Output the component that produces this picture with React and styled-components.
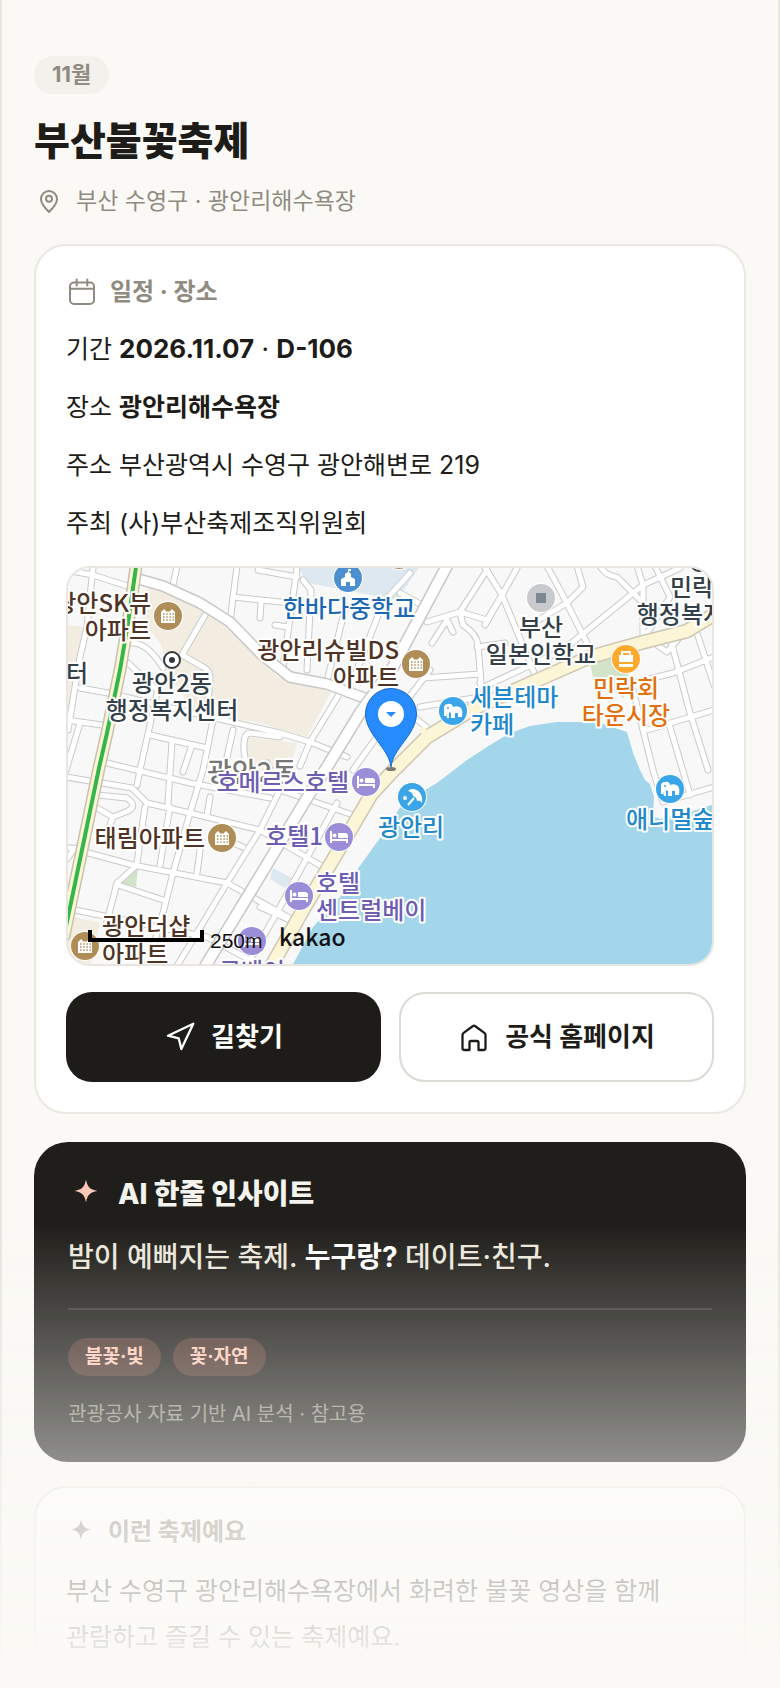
import React from "react";
import styled, { createGlobalStyle, css } from "styled-components";

const Global = createGlobalStyle`
  * { box-sizing: border-box; }
  body {
    margin: 0;
    background: #faf9f5;
    color: #1d1c18;
    font-family: Inter, "Noto Sans CJK KR", sans-serif;
    font-size: 25px;
  }
`;

const Shell = styled.main`
  min-height: 100vh;
  padding: 56px 32px 0;
  border: solid #e8e6df;
  border-width: 0 2px;
`;

const MonthChip = styled.span`
  display: block;
  width: fit-content;
  padding: 0 18px 2px;
  border-radius: 19px;
  background: #f2f1ec;
  color: #8f8b80;
  font-size: 22px;
  font-weight: 700;
  line-height: 36px;
`;

const Title = styled.h1`
  margin: 20px 0 0;
  font-size: 39px;
  font-weight: 800;
  line-height: 54px;
`;

const Location = styled.p`
  display: flex;
  align-items: center;
  gap: 12px;
  margin: 18px 0 0;
  color: #8f8b80;
  font-size: 23px;
  line-height: 30px;
`;

const Card = styled.section`
  margin-top: ${(p) => p.$gap}px;
  padding: ${(p) => p.$padding};
  border: 2px solid #eae8e1;
  border-radius: 32px;
  background: #fff;
`;

const CardTitle = styled.h2`
  display: flex;
  align-items: center;
  gap: 12px;
  height: 32px;
  margin: 0;
  color: #8f8b80;
  font-size: 24px;
  font-weight: 700;
  line-height: 32px;
`;

const InfoList = styled.dl`
  display: flex;
  flex-direction: column;
  gap: 16px;
  margin: 20px 0 0;
`;

const InfoRow = styled.div`
  display: flex;
  gap: 7px;
  line-height: 42px;

  dd {
    margin: 0;
    font-size: ${(p) => (p.$numeric ? 26 : 25)}px;
  }
`;

const MapFrame = styled.div`
  height: 400px;
  margin-top: 22px;
  border: 2px solid #eae6df;
  border-radius: 24px;
  overflow: hidden;
  background: #f8f8f8;

  svg {
    display: block;
    width: 100%;
    height: 100%;
  }
`;

const Actions = styled.div`
  display: grid;
  grid-template-columns: 1fr 1fr;
  gap: 18px;
  margin-top: 26px;
`;

const action = css`
  display: flex;
  align-items: center;
  justify-content: center;
  gap: 15px;
  height: 90px;
  padding: 0;
  border-radius: 26px;
  font-family: inherit;
  font-size: 26px;
  font-weight: 700;
  line-height: 36px;
`;

const PrimaryButton = styled.button`
  ${action}
  border: 0;
  background: #1d1c18;
  color: #fff;
`;

const OutlineLink = styled.a`
  ${action}
  border: 2px solid #dcdad2;
  background: #fff;
  color: #1d1c18;
  text-decoration: none;
`;

const InsightCard = styled.section`
  margin-top: 28px;
  padding: 34px;
  border-radius: 34px;
  background: #1f1e1a;
`;

const InsightTitle = styled.h2`
  display: flex;
  align-items: center;
  gap: 14px;
  margin: 0;
  color: #f5f3ee;
  font-size: 28px;
  font-weight: 800;
  line-height: 36px;
`;

const InsightText = styled.p`
  margin: 22px 0 0;
  color: #ece7dc;
  font-size: 28px;
  font-weight: 500;
  line-height: 46px;

  strong { color: #fff; }
`;

const TagRow = styled.ul`
  display: flex;
  gap: 12px;
  margin: 28px 0 0;
  padding: 28px 0 0;
  border-top: 2px solid #3a3935;
  list-style: none;
`;

const Tag = styled.li`
  padding: 0 17px;
  border-radius: 19px;
  background: #4a332c;
  color: #ffc9b8;
  font-size: 19px;
  font-weight: 700;
  line-height: 38px;
`;

const Note = styled.p`
  margin: 24px 0 0;
  color: #8f8b80;
  font-size: 20px;
  line-height: 28px;
`;

const Description = styled.p`
  margin: 20px 0 0;
  line-height: 46px;
  word-break: keep-all;
`;

const BottomFade = styled.div`
  position: fixed;
  right: 0;
  bottom: 0;
  left: 0;
  height: 466px;
  background: linear-gradient(rgba(250, 249, 245, 0), #faf9f5);
  pointer-events: none;
`;

const MapText = styled.text`
  font-family: "Noto Sans CJK KR", sans-serif;
  font-size: ${(p) => p.$size || 24}px;
  font-weight: 500;
  fill: ${(p) => p.$color};
  stroke: #fff;
  stroke-width: 4px;
  stroke-linejoin: round;
  paint-order: stroke;
`;

const ScaleText = styled.text`
  font-family: ${(p) => p.$family}, sans-serif;
  font-size: ${(p) => p.$size}px;
  font-weight: ${(p) => p.$weight};
  fill: #111;
`;

const Line = ({ size, width = 2, children }) => (
  <svg width={size} height={size} viewBox={`0 0 ${size} ${size}`} fill="none" stroke="currentColor" strokeWidth={width} strokeLinecap="round" strokeLinejoin="round" aria-hidden="true">
    {children}
  </svg>
);

const PinIcon = () => (
  <Line size={30}>
    <path d="M15 26 C13 24 7 18.500 7 13 A8 8 0 0 1 23 13 C23 18.500 17 24 15 26 Z" />
    <circle cx="15" cy="12.800" r="3" />
  </Line>
);

const CalendarIcon = () => (
  <Line size={32}>
    <rect x="4" y="6.500" width="24" height="21.500" rx="4" />
    <path d="M4 12.800H28M10.700 3.500V9.500M21.300 3.500V9.500" />
  </Line>
);

const RouteIcon = () => (
  <Line size={32} width={2.3}>
    <path d="M4 14.700 29.300 2.700 17.300 28 14.700 17.300Z" />
  </Line>
);

const HomeIcon = () => (
  <Line size={32} width={2.3}>
    <path d="M4.500 14 Q4.500 13 5.300 12.200 L15 5 Q16 4.200 17 5 L26.700 12.200 Q27.500 13 27.500 14 V27 Q27.500 29 25.500 29 H20.500 V21.500 Q20.500 20 19 20 H13 Q11.500 20 11.500 21.500 V29 H6.500 Q4.500 29 4.500 27 Z" />
  </Line>
);

const Sparkle = ({ size, r, color }) => (
  <svg width={size} height={size} viewBox="-18 -15 36 36" aria-hidden="true">
    <path transform={`scale(${r})`} fill={color} d="M0 -12 C1.500 -4 4 -1.500 12 0 C4 1.500 1.500 4 0 12 C-1.500 4 -4 1.500 -12 0 C-4 -1.500 -1.500 -4 0 -12Z" />
  </svg>
);

const minorRoads = [
  "M66 570 93 575 130 587", "M93 568 87 627 80 657 68 730", "M177 566 172 590", "M237 566 230 622",
  "M233 597 290 603", "M261 603 260 618", "M205 615 182 655 203 667Q211 671 210 680L208 700", "M132 643Q148 643 163 668",
  "M128 663 157 690", "M80 688 108 693 193 713 280 733 310 742 347 757", "M66 720 102 725", "M80 723 66 770",
  "M157 693 140 770 137 785", "M150 735 207 748", "M213 720 203 770 190 813 173 873 163 913 153 947",
  "M172 742 168 803", "M192 745 183 772", "M233 730 223 775", "M280 737 250 733Q243 733 244 750L247 775",
  "M107 763 190 783 270 798", "M66 777 132 788 147 803 190 813 260 830", "M145 807 137 863",
  "M97 795 127 798Q138 806 128 811L113 817 97 808", "M113 817 108 830", "M170 807 160 865", "M210 797 207 815",
  "M70 848 133 865 227 883 293 920", "M137 865 117 883 106 925", "M118 885 163 900", "M75 910 207 937 250 960",
  "M280 790 260 830 227 883 177 966", "M233 843 243 847", "M200 850 197 873", "M280 790 353 815",
  "M260 830 323 867", "M337 803 280 907 250 960", "M260 907 290 920", "M267 763 280 790", "M66 860 75 848",
  "M258 570 297 577", "M297 568 283 667", "M303 580 311 590 307 670", "M343 617 328 677", "M275 625 288 627",
  "M410 573 383 603 353 680", "M400 593 422 605", "M427 622 460 612 487 570", "M460 612 487 620 502 595",
  "M432 643 447 620 453 632", "M460 612 463 625Q477 634 478 645L481 683", "M423 678 480 674", "M477 647 505 643",
  "M430 670 407 700", "M340 693 310 742 300 766", "M420 707 480 697", "M393 700 430 730", "M396 710 353 770",
  "M484 566 502 595 535 675", "M517 568 502 595 485 625", "M547 566 560 590 588 645", "M577 566 583 587 567 603 535 622",
  "M643 585 563 650 488 685", "M600 566Q606 576 617 577L643 603", "M637 566 643 585V643", "M643 585 680 568",
  "M655 566 670 597 646 635", "M650 640 667 652 690 625", "M633 683 673 673 714 657", "M670 637 690 713 708 770",
  "M633 690 653 770 663 802 714 787", "M647 730 714 710", "M670 727 690 795", "M697 633 714 685", "M480 683 490 703",
];

const brown = "#4f3426";
const slate = "#344049";
const violet = "#6d5db3";
const sky = "#2088cb";

const labels = [
  { x: 151, y: 612, a: "end", c: brown, t: "광안SK뷰" }, { x: 151, y: 639, a: "end", c: brown, t: "아파트" },
  { x: 88, y: 682, a: "end", c: slate, t: "터" },
  { x: 172, y: 692, a: "middle", c: slate, t: "광안2동" }, { x: 172, y: 719, a: "middle", c: slate, t: "행정복지센터" },
  { x: 399, y: 659, a: "end", c: brown, t: "광안리슈빌DS" }, { x: 399, y: 686, a: "end", c: brown, t: "아파트" },
  { x: 349, y: 617, a: "middle", c: "#1d68b5", t: "한바다중학교" },
  { x: 252, y: 782, a: "middle", c: "#777", s: 27, t: "광안2동" },
  { x: 349, y: 791, a: "end", c: violet, t: "호메르스호텔" }, { x: 323, y: 845, a: "end", c: violet, t: "호텔1" },
  { x: 316, y: 892, a: "start", c: violet, t: "호텔" }, { x: 316, y: 919, a: "start", c: violet, t: "센트럴베이" },
  { x: 252, y: 980, a: "middle", c: violet, t: "루베이" },
  { x: 411, y: 836, a: "middle", c: sky, t: "광안리" },
  { x: 470, y: 706, a: "start", c: sky, t: "세븐테마" }, { x: 470, y: 733, a: "start", c: sky, t: "카페" },
  { x: 541, y: 636, a: "middle", c: slate, t: "부산" }, { x: 541, y: 663, a: "middle", c: slate, t: "일본인학교" },
  { x: 703, y: 596, a: "middle", c: slate, t: "민락동" }, { x: 703, y: 623, a: "middle", c: slate, t: "행정복지센터" },
  { x: 626, y: 697, a: "middle", c: "#e2700d", t: "민락회" }, { x: 626, y: 724, a: "middle", c: "#e2700d", t: "타운시장" },
  { x: 626, y: 828, a: "start", c: sky, t: "애니멀숲" },
  { x: 205, y: 847, a: "end", c: brown, t: "태림아파트" },
  { x: 102, y: 935, a: "start", c: brown, t: "광안더샵" }, { x: 102, y: 963, a: "start", c: brown, t: "아파트" },
];

const glyphs = {
  apartment: (
    <g>
      <path fill="#fff" d="M-7 7V-4L-4 -7 -1 -4 0 -5 1 -4 4 -7 7 -4V7Z" />
      <path stroke="#b08d57" strokeWidth="1.500" strokeDasharray="1.500 1.700" d="M-5 -2H6M-5 1H6M-5 4H6" />
    </g>
  ),
  hotel: (
    <g fill="#fff">
      <path d="M-9 -6H-7V2H9V6H7V4H-7V6H-9Z" />
      <circle cx="-4.500" cy="-1.500" r="2" />
      <path d="M-1 -4H6Q9 -4 9 -1V1H-1Z" />
    </g>
  ),
  zoo: (
    <path fill="#fff" d="M-9 -3Q-9 -7 -5 -7Q-1 -8 0 -4Q5 -6 8 -3Q10 0 9 6H5V2H2V7H-2V2L-4 1V7H-6L-7 3V5H-9Z M-5 -4A1 1 0 1 0 -5 -2A1 1 0 1 0 -5 -4" fillRule="evenodd" />
  ),
  beach: (
    <g fill="#fff">
      <path d="M-4 -6C1 -11 12 -6 10 6C8 3 7 3 5 4C5 1 3 0 1 -1C1 -3 0 -5 -4 -6Z" />
      <circle cx="-7" cy="1" r="2" />
      <path stroke="#fff" strokeWidth="2" d="M2 1-4 8" />
    </g>
  ),
  school: (
    <path fill="#fff" d="M-7 8V1L-3 -1V-4L0 -6V-9H3V-7H1V-6L3 -4V-1L7 1V8H2V4H-2V8Z" />
  ),
  market: (
    <g>
      <path fill="#fff" d="M-7 -4H7V3H-7Z M-7 5H7V8H-7Z" />
      <path fill="none" stroke="#fff" strokeWidth="2" d="M-4 -4V-7H4V-4" />
    </g>
  ),
  square: <path fill="#7b888f" d="M-5 -5H5V5H-5Z" />,
  none: null,
};

const places = [
  [168, 616, "#b08d57", "apartment"], [416, 664, "#b08d57", "apartment"], [222, 838, "#b08d57", "apartment"],
  [85, 946, "#b08d57", "apartment"], [399, 555, "#b08d57", "none"], [348, 578, "#4c90d2", "school"],
  [541, 598, "#c9cace", "square"], [626, 659, "#fda92e", "market"], [453, 711, "#3aa5e8", "zoo"],
  [670, 789, "#3aa5e8", "zoo"], [412, 797, "#3aa5e8", "beach"], [366, 782, "#9b8dd8", "hotel"],
  [339, 837, "#9b8dd8", "hotel"], [299, 896, "#9b8dd8", "hotel"], [252, 941, "#9b8dd8", "hotel"],
];

const Road = ({ d, outer, inner, edge = "#c8c8c8", fill = "#fff" }) => (
  <g fill="none" strokeLinejoin="round" strokeLinecap="round">
    <path d={d} stroke={edge} strokeWidth={outer} />
    <path d={d} stroke={fill} strokeWidth={inner} />
  </g>
);

const VenueMap = () => (
  <svg viewBox="68 568 644 396" preserveAspectRatio="xMidYMid slice" role="img" aria-label="광안리해수욕장 지도">
    <rect x="-400" y="300" width="1600" height="900" fill="#f8f8f8" />
    <g fill="#f3ece1">
      <path d="M140 592 153 587 200 607 227 623 260 660 280 678 332 690 307 737 260 723 193 711 172 680 160 643 143 620Z" />
      <path d="M247 737 297 743 292 764 273 793 243 789Z" />
      <path d="M66 625 84 627 70 707H66Z" />
      <path d="M66 915 100 923 95 945 90 966H66Z" />
    </g>
    <path fill="#dde8f1" d="M297 566H420L397 600 360 593 308 583ZM273 868 292 878 285 888 270 879Z" />
    <path fill="#d3e3c8" d="M590 663 617 655 633 683 623 698 606 682 593 677ZM138 868 136 887 120 883Z" />
    <g fill="none" strokeLinejoin="round" strokeLinecap="round">
      {minorRoads.map((d) => <path key={d} d={d} stroke="#cacaca" strokeWidth="7" />)}
      {minorRoads.map((d) => <path key={d} d={d} stroke="#fff" strokeWidth="5" />)}
    </g>
    <Road outer={12} inner={9} d="M135 578 163 586 200 603 230 622 262 655 290 677 327 684 375 702" />
    <Road outer={13} inner={10} d="M450 560 417 622 393 667 360 713 327 767 310 793 260 876 203 970" />
    <path fill="#a3d6eb" d="M291 968 313 927 340 897 357 870 380 838 403 803 437 783 467 760 490 745 510 733 530 726 557 722 583 722 603 724 627 732 633 753 640 770 645 780 650 784 654 797 653 816 660 819 690 812 714 804V968Z" />
    <path fill="none" stroke="#cfc6b3" strokeWidth="15" d="M268 972 303 910 337 853 371 795 391 773 427 737 473 709 533 682 590 657 640 643 687 631 718 612" />
    <path fill="none" stroke="#fcf6d6" strokeWidth="6" strokeLinecap="round" d="M427 737 423 730" />
    <path fill="none" stroke="#fcf6d6" strokeWidth="12" strokeLinejoin="round" d="M268 972 303 910 337 853 371 795 391 773 427 737 473 709 533 682 590 657 640 643 687 631 718 612" />
    <Road outer={13} inner={10} edge="#c9c1ac" fill="#fcf6d6" d="M137 560 128 623 120 670 107 733 99 768 82 850 64 936" />
    <path fill="none" stroke="#34b64b" strokeWidth="4" d="M137 560 128 623 120 670 107 733 99 768 82 850 64 936" />

    {labels.map((l) => (
      <MapText key={`${l.t}-${l.x}-${l.y}`} x={l.x} y={l.y} textAnchor={l.a} $color={l.c} $size={l.s}>{l.t}</MapText>
    ))}

    {[[172, 660], [699, 563]].map(([x, y]) => (
      <g key={x}>
        <circle cx={x} cy={y} r="8" fill="#fff" stroke="#333b42" strokeWidth="2" />
        <circle cx={x} cy={y} r="3" fill="#333b42" />
      </g>
    ))}
    {places.map(([x, y, color, kind]) => (
      <g key={`${x}-${y}`} transform={`translate(${x} ${y})`}>
        <circle r="15" fill="#fff" />
        <circle r="14" fill={color} />
        {glyphs[kind]}
      </g>
    ))}

    <ellipse cx="391" cy="769" rx="5" ry="2" fill="#444" opacity="0.700" />
    <path fill="#268bff" stroke="#1868cc" strokeWidth="1" d="M391 767C389 748 366 735 365.500 714A25.500 25.500 0 0 1 416.500 714C416 735 393 748 391 767Z" />
    <circle cx="391" cy="714" r="13" fill="#fff" />
    <path fill="#268bff" d="M386 712H396L391 717Z" />

    <path fill="none" stroke="#000" strokeWidth="4" d="M90 930V940H202V930" />
    <ScaleText x="210" y="948" $family={'"Liberation Sans"'} $size={21} $weight={400}>250m</ScaleText>
    <ScaleText x="279" y="946" $family={'"Noto Sans CJK KR"'} $size={23} $weight={500}>kakao</ScaleText>
  </svg>
);

export default function App() {
  return (
    <>
      <Global />
      <Shell>
        <MonthChip>11월</MonthChip>
        <Title>부산불꽃축제</Title>
        <Location><PinIcon />부산 수영구 · 광안리해수욕장</Location>

        <Card $gap={28} $padding="30px">
          <CardTitle><CalendarIcon />일정 · 장소</CardTitle>
          <InfoList>
            <InfoRow $numeric><dt>기간</dt><dd><strong>2026.11.07</strong> · <strong>D-106</strong></dd></InfoRow>
            <InfoRow><dt>장소</dt><dd><strong>광안리해수욕장</strong></dd></InfoRow>
            <InfoRow><dt>주소</dt><dd>부산광역시 수영구 광안해변로 219</dd></InfoRow>
            <InfoRow><dt>주최</dt><dd>(사)부산축제조직위원회</dd></InfoRow>
          </InfoList>
          <MapFrame><VenueMap /></MapFrame>
          <Actions>
            <PrimaryButton type="button"><RouteIcon />길찾기</PrimaryButton>
            <OutlineLink href="#homepage"><HomeIcon />공식 홈페이지</OutlineLink>
          </Actions>
        </Card>

        <InsightCard>
          <InsightTitle><Sparkle size={36} r={0.95} color="#ffc9b8" />AI 한줄 인사이트</InsightTitle>
          <InsightText>밤이 예뻐지는 축제. <strong>누구랑?</strong> 데이트·친구.</InsightText>
          <TagRow>
            <Tag>불꽃·빛</Tag>
            <Tag>꽃·자연</Tag>
          </TagRow>
          <Note>관광공사 자료 기반 AI 분석 · 참고용</Note>
        </InsightCard>

        <Card $gap={24} $padding="28px 30px 26px">
          <CardTitle><Sparkle size={30} r={1} color="#8f8b80" />이런 축제예요</CardTitle>
          <Description>부산 수영구 광안리해수욕장에서 화려한 불꽃 영상을 함께 관람하고 즐길 수 있는 축제예요.</Description>
        </Card>
      </Shell>
      <BottomFade />
    </>
  );
}
